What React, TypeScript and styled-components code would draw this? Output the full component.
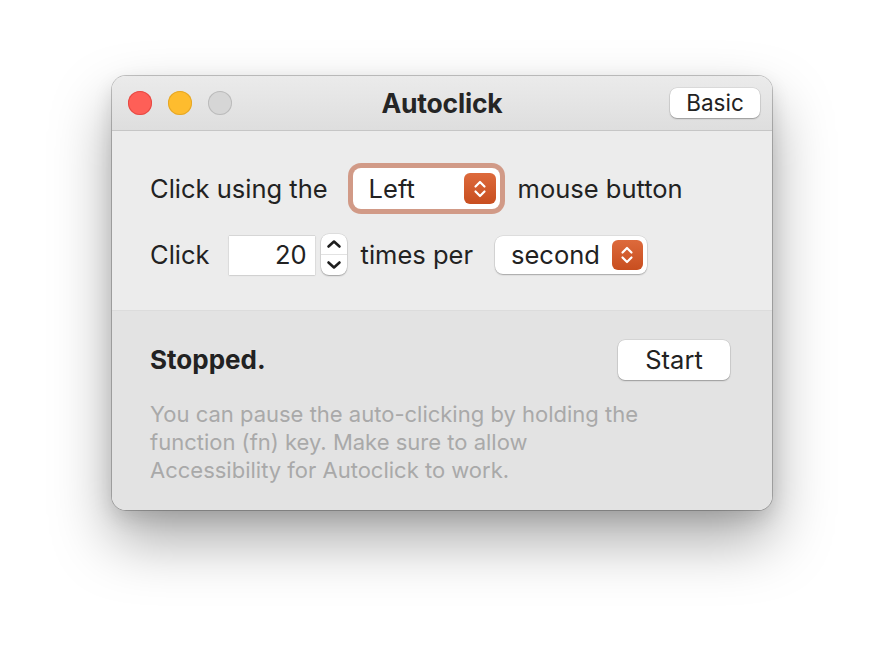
import React from 'react';
import styled, { createGlobalStyle } from 'styled-components';

const GlobalStyle = createGlobalStyle`
  html, body {
    margin: 0;
    background: #ffffff;
  }
  body {
    font-family: Inter, "Noto Sans", "Liberation Sans", sans-serif;
    color: #222222;
  }
`;

const Page = styled.div`
  display: flex;
  justify-content: center;
  padding-top: 76px;
  height: 658px;
  box-sizing: border-box;
`;

const Window = styled.div`
  width: 660px;
  height: 434px;
  border-radius: 14px;
  overflow: hidden;
  display: flex;
  flex-direction: column;
  box-shadow: 0 0 0 1px rgba(0, 0, 0, 0.22), 0 30px 60px rgba(0, 0, 0, 0.34),
    0 8px 20px rgba(0, 0, 0, 0.12);
`;

const TitleBar = styled.div`
  height: 55px;
  flex: none;
  box-sizing: border-box;
  display: grid;
  grid-template-columns: 1fr auto 1fr;
  align-items: center;
  padding: 0 12px;
  background: linear-gradient(#ebebeb, #dedede);
  border-bottom: 1px solid #c6c6c6;
`;

const Lights = styled.div`
  display: flex;
  gap: 16px;
  margin-left: 4px;
`;

const Light = styled.span<{ $c: string; $b: string }>`
  width: 24px;
  height: 24px;
  border-radius: 50%;
  background: ${(p) => p.$c};
  box-shadow: inset 0 0 0 1px ${(p) => p.$b};
`;

const Title = styled.div`
  font-size: 26.5px;
  line-height: 1;
  font-weight: 700;
  color: #252525;
  letter-spacing: -0.2px;
`;

const PushButton = styled.button<{ $w: number; $h: number; $fs: number }>`
  width: ${(p) => p.$w}px;
  height: ${(p) => p.$h}px;
  border: none;
  border-radius: 7px;
  background: #ffffff;
  font-family: inherit;
  font-size: ${(p) => p.$fs}px;
  line-height: 1;
  color: #222;
  padding: 0;
  box-shadow: 0 0 0 0.5px rgba(0, 0, 0, 0.12), 0 1px 1.5px rgba(0, 0, 0, 0.28);
  justify-self: end;
`;

const Settings = styled.div`
  background: #ececec;
  padding: 32px 40px 35px 38px;
  display: flex;
  flex-direction: column;
  gap: 20px;
  border-bottom: 1px solid #dcdcdc;
`;

const Row = styled.div<{ $h: number }>`
  display: flex;
  align-items: center;
  height: ${(p) => p.$h}px;
`;

const Label = styled.span<{ $ml?: number }>`
  font-size: 25.5px;
  line-height: 1;
  margin-left: ${(p) => p.$ml || 0}px;
  white-space: nowrap;
`;

const Popup = styled.div<{ $w: number; $h: number; $ml: number; $focus?: boolean }>`
  width: ${(p) => p.$w}px;
  height: ${(p) => p.$h}px;
  margin-left: ${(p) => p.$ml}px;
  box-sizing: border-box;
  display: flex;
  align-items: center;
  justify-content: space-between;
  padding: 0 4px 0 16px;
  background: #ffffff;
  border-radius: 8px;
  font-size: 25.5px;
  line-height: 1;
  box-shadow: ${(p) =>
    p.$focus
      ? '0 0 0 5px rgba(205, 140, 118, 0.85)'
      : '0 0 0 0.5px rgba(0,0,0,0.12), 0 1px 1.5px rgba(0,0,0,0.25)'};
`;

const Badge = styled.span<{ $w: number; $h: number }>`
  width: ${(p) => p.$w}px;
  height: ${(p) => p.$h}px;
  border-radius: 6px;
  background: linear-gradient(#dd6a3c, #c84e1f);
  display: flex;
  align-items: center;
  justify-content: center;
`;

const NumberField = styled.div`
  width: 86px;
  height: 40px;
  margin-left: 19px;
  box-sizing: border-box;
  background: #ffffff;
  border-top: 1px solid #d6d6d6;
  box-shadow: 0 0.5px 1.5px rgba(0, 0, 0, 0.3);
  display: flex;
  align-items: center;
  justify-content: flex-end;
  padding-right: 8px;
  font-size: 25.5px;
  line-height: 1;
`;

const Stepper = styled.div`
  width: 26px;
  height: 41px;
  margin-left: 6px;
  border-radius: 8px;
  background: #ffffff;
  box-shadow: 0 0 0 0.5px rgba(0, 0, 0, 0.12), 0 1px 1.5px rgba(0, 0, 0, 0.28);
  display: flex;
  flex-direction: column;
`;

const StepHalf = styled.span<{ $top?: boolean }>`
  flex: 1;
  display: flex;
  align-items: center;
  justify-content: center;
  border-bottom: ${(p) => (p.$top ? '1px solid #e2e2e2' : 'none')};
`;

const Status = styled.div`
  flex: 1;
  background: #e3e3e3;
  padding: 29px 42px 0 38px;
  display: flex;
  flex-direction: column;
  gap: 20px;
`;

const StatusRow = styled.div`
  display: flex;
  align-items: center;
  justify-content: space-between;
  height: 40px;
`;

const StatusText = styled.span`
  font-size: 26px;
  line-height: 1;
  font-weight: 700;
  color: #222;
`;

const Hint = styled.p`
  margin: 0;
  font-size: 22px;
  line-height: 28px;
  color: #a9a9a9;
  width: 510px;
`;

const Chevrons = ({ color }: { color: string }) => (
  <svg width="16" height="24" viewBox="0 0 16 24" fill="none">
    <path d="M3.5 9.5 L8 5 L12.5 9.5" stroke={color} strokeWidth="2.2" strokeLinecap="round" strokeLinejoin="round" />
    <path d="M3.5 14.5 L8 19 L12.5 14.5" stroke={color} strokeWidth="2.2" strokeLinecap="round" strokeLinejoin="round" />
  </svg>
);

const Chevron = ({ down }: { down?: boolean }) => (
  <svg width="18" height="12" viewBox="0 0 18 12" fill="none">
    <path
      d={down ? 'M3.5 3.5 L9 8.5 L14.5 3.5' : 'M3.5 8.5 L9 3.5 L14.5 8.5'}
      stroke="#1e1e1e"
      strokeWidth="2.6"
      strokeLinecap="round"
      strokeLinejoin="round"
    />
  </svg>
);

export default function App() {
  return (
    <Page>
      <GlobalStyle />
      <Window>
        <TitleBar>
          <Lights>
            <Light $c="#fe5f57" $b="rgba(224,68,62,0.8)" />
            <Light $c="#febc2e" $b="rgba(222,161,35,0.8)" />
            <Light $c="#d6d6d6" $b="rgba(180,180,180,0.8)" />
          </Lights>
          <Title>Autoclick</Title>
          <PushButton $w={90} $h={30} $fs={22.5}>Basic</PushButton>
        </TitleBar>

        <Settings>
          <Row $h={51}>
            <Label>Click using the</Label>
            <Popup $w={147} $h={41} $ml={25} $focus>
              Left
              <Badge $w={32} $h={31}>
                <Chevrons color="#fff" />
              </Badge>
            </Popup>
            <Label $ml={18}>mouse button</Label>
          </Row>
          <Row $h={41}>
            <Label>Click</Label>
            <NumberField>20</NumberField>
            <Stepper>
              <StepHalf $top>
                <Chevron />
              </StepHalf>
              <StepHalf>
                <Chevron down />
              </StepHalf>
            </Stepper>
            <Label $ml={14}>times per</Label>
            <Popup $w={152} $h={38} $ml={22}>
              second
              <Badge $w={31} $h={30}>
                <Chevrons color="#fff" />
              </Badge>
            </Popup>
          </Row>
        </Settings>

        <Status>
          <StatusRow>
            <StatusText>Stopped.</StatusText>
            <PushButton $w={112} $h={40} $fs={25.5}>Start</PushButton>
          </StatusRow>
          <Hint>
            You can pause the auto-clicking by holding the function (fn) key. Make sure to allow
            Accessibility for Autoclick to work.
          </Hint>
        </Status>
      </Window>
    </Page>
  );
}
